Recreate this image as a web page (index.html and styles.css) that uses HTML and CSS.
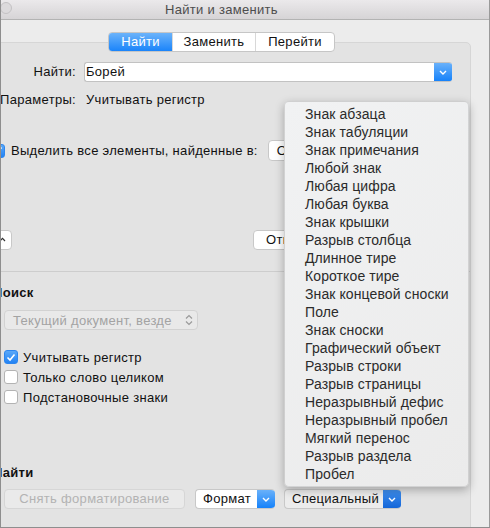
FILE: index.html
```html
<!DOCTYPE html>
<html lang="ru">
<head>
<meta charset="utf-8">
<title>Найти и заменить</title>
<link rel="stylesheet" href="styles.css">
</head>
<body>
<div class="frame">
  <div class="window">
    <div class="titlebar">
      <div class="lights"><span class="light"></span><span class="light"></span><span class="light"></span></div>
      <span class="title">Найти и заменить</span>
    </div>
    <div class="content">
      <div class="panel">
        <div class="tabs">
          <span class="tab tab-on">Найти</span>
          <span class="tab">Заменить</span>
          <span class="tab">Перейти</span>
        </div>

        <div class="find-grid">
          <span class="label">Найти:</span>
          <div class="combo">
            <span class="combo-text">Борей</span>
            <span class="blue-seg"><svg width="8" height="5" viewBox="0 0 8 5"><polyline points="1,1 4,4 7,1" fill="none" stroke="#fff" stroke-width="1.4"/></svg></span>
          </div>
          <span class="label">Параметры:</span>
          <span class="value">Учитывать регистр</span>
        </div>

        <div class="highlight-row">
          <span class="check on"><svg width="10" height="9" viewBox="0 0 10 9"><polyline points="1.5,4.5 4,7 8.5,1.5" fill="none" stroke="#fff" stroke-width="1.6"/></svg></span>
          <span class="text">Выделить все элементы, найденные в:</span>
          <span class="popup-btn">Основной документ</span>
        </div>

        <div class="actions-row">
          <span class="small-btn"><svg width="7" height="5" viewBox="0 0 7 5"><polyline points="1,4 3.5,1.3 6,4" fill="none" stroke="#333" stroke-width="1.2"/></svg></span>
          <span class="push-btn">Отмена</span>
        </div>

        <div class="sep"></div>

        <div class="section">
          <div class="heading">Поиск</div>
          <div class="scope">
            <span class="scope-text">Текущий документ, везде</span>
            <svg class="updown" width="8" height="12" viewBox="0 0 8 12"><polyline points="1,4.5 4,1.5 7,4.5" fill="none" stroke="#9a9a9a" stroke-width="1.2"/><polyline points="1,7.5 4,10.5 7,7.5" fill="none" stroke="#9a9a9a" stroke-width="1.2"/></svg>
          </div>
          <div class="opts">
            <div class="opt"><span class="check on"><svg width="10" height="9" viewBox="0 0 10 9"><polyline points="1.5,4.5 4,7 8.5,1.5" fill="none" stroke="#fff" stroke-width="1.6"/></svg></span><span>Учитывать регистр</span></div>
            <div class="opt"><span class="check"></span><span>Только слово целиком</span></div>
            <div class="opt"><span class="check"></span><span>Подстановочные знаки</span></div>
          </div>
        </div>

        <div class="section">
          <div class="heading heading-find">Найти</div>
          <div class="btn-row">
            <span class="disabled-btn">Снять форматирование</span>
            <span class="seg-popup fmt"><span class="seg-text">Формат</span><span class="blue-seg"><svg width="8" height="5" viewBox="0 0 8 5"><polyline points="1,1 4,4 7,1" fill="none" stroke="#fff" stroke-width="1.4"/></svg></span></span>
            <span class="seg-popup special pressed"><span class="seg-text">Специальный</span><span class="blue-seg dark"><svg width="8" height="5" viewBox="0 0 8 5"><polyline points="1,1 4,4 7,1" fill="none" stroke="#fff" stroke-width="1.4"/></svg></span></span>
          </div>
        </div>
      </div>
    </div>
  </div>

  <ul class="menu">
    <li>Знак абзаца</li>
    <li>Знак табуляции</li>
    <li>Знак примечания</li>
    <li>Любой знак</li>
    <li>Любая цифра</li>
    <li>Любая буква</li>
    <li>Знак крышки</li>
    <li>Разрыв столбца</li>
    <li>Длинное тире</li>
    <li>Короткое тире</li>
    <li>Знак концевой сноски</li>
    <li>Поле</li>
    <li>Знак сноски</li>
    <li>Графический объект</li>
    <li>Разрыв строки</li>
    <li>Разрыв страницы</li>
    <li>Неразрывный дефис</li>
    <li>Неразрывный пробел</li>
    <li>Мягкий перенос</li>
    <li>Разрыв раздела</li>
    <li>Пробел</li>
  </ul>
</div>
</body>
</html>
```

FILE: styles.css
```css
* { box-sizing: border-box; }

html, body {
  margin: 0;
  padding: 0;
  background: #f4f4f4;
}

body {
  font-family: "Liberation Sans", Arial, sans-serif;
  font-size: 13px;
  letter-spacing: 0.3px;
  color: #111;
}

.frame {
  position: relative;
  width: 490px;
  height: 528px;
  overflow: hidden;
  border-left: 1px solid #8e8e8e;
  border-bottom: 1px solid #8e8e8e;
}

.window {
  margin-left: -48px;
  width: 537px;
  height: 540px;
  border-left: 1px solid #8e8e8e;
  border-right: 1px solid #9a9a9a;
  background: #ececec;
  display: flex;
  flex-direction: column;
}

.titlebar {
  position: relative;
  height: 20px;
  flex: none;
  background: linear-gradient(#ebe9eb, #d6d4d6);
  border-bottom: 1px solid #b3b3b3;
  display: flex;
  justify-content: center;
  align-items: center;
}

.lights {
  position: absolute;
  left: 6px;
  top: 2px;
  display: flex;
  gap: 8px;
}

.light {
  width: 12px;
  height: 12px;
  border-radius: 50%;
  background: #dcdadc;
  border: 1px solid #c4c2c4;
}

.title {
  color: #4d4d4d;
  font-size: 13px;
  line-height: 16px;
  padding-top: 1px;
}

.content {
  flex: 1;
  padding: 22px 18px 0 18px;
}

.panel {
  height: 520px;
  background: #e3e3e3;
  border: 1px solid #d6d6d6;
  border-radius: 5px;
}

/* tabs */
.tabs {
  display: flex;
  width: max-content;
  margin: -11px auto 0;
  height: 20px;
  border: 1px solid #c6c6c6;
  border-radius: 4px;
  background: #fff;
  overflow: hidden;
}

.tab {
  display: flex;
  align-items: center;
  justify-content: center;
  color: #111;
  line-height: 18px;
  border-left: 1px solid #d8d8d8;
  white-space: nowrap;
}

.tab:first-child { border-left: none; }
.tab:nth-child(2) { width: 83px; }
.tab:nth-child(3) { width: 79px; }

.tab-on {
  width: 63px;
  color: #fff;
  background: linear-gradient(#6bb3fa, #1a84fa);
}

/* find grid */
.find-grid {
  display: grid;
  grid-template-columns: 103px 1fr;
  column-gap: 8px;
  row-gap: 10px;
  margin: 10px 18px 0 0;
  align-items: center;
}

.label {
  display: flex;
  justify-content: flex-end;
  white-space: nowrap;
  line-height: 16px;
}

.value {
  padding-left: 2px;
  line-height: 16px;
}

.combo {
  display: flex;
  height: 20px;
  background: #fff;
  border: 1px solid #c2c2c2;
  border-right: none;
  border-radius: 3px;
  overflow: hidden;
}

.combo-text {
  flex: 1;
  padding-left: 1px;
  line-height: 18px;
}

.blue-seg {
  width: 18px;
  flex: none;
  display: flex;
  align-items: center;
  justify-content: center;
  background: linear-gradient(#69b1fa, #1682fa);
  padding-top: 1px;
}

.blue-seg.dark {
  background: linear-gradient(#3f8fee, #1466d8);
}

/* highlight row */
.highlight-row {
  display: flex;
  align-items: center;
  height: 21px;
  margin-top: 32px;
  padding-left: 18px;
  white-space: nowrap;
}

.check {
  width: 14px;
  height: 14px;
  flex: none;
  border-radius: 3px;
  background: #fff;
  border: 1px solid #b3b3b3;
  display: flex;
  align-items: center;
  justify-content: center;
}

.check.on {
  border-color: #2d86ee;
  background: linear-gradient(#5aa8f8, #2383f4);
}

.highlight-row .text { margin-left: 6px; }

.popup-btn {
  margin-left: 10px;
  height: 21px;
  line-height: 19px;
  padding: 0 8px;
  background: #fff;
  border: 1px solid #c8c8c8;
  border-radius: 4px;
  width: 160px;
  flex: none;
  overflow: hidden;
}

/* actions row */
.actions-row {
  display: flex;
  align-items: center;
  margin-top: 69px;
  height: 20px;
  padding-left: 19px;
}

.small-btn {
  width: 20px;
  height: 20px;
  display: flex;
  align-items: center;
  justify-content: center;
  padding-bottom: 2px;
  background: #fff;
  border: 1px solid #c8c8c8;
  border-radius: 4px;
}

.push-btn {
  margin-left: 241px;
  height: 20px;
  line-height: 18px;
  padding: 0 12px;
  width: 90px;
  background: #fff;
  border: 1px solid #c8c8c8;
  border-radius: 4px;
}

.sep {
  height: 1px;
  background: #cdcdcd;
  margin-top: 21px;
}

/* sections */
.section {
  padding-left: 20px;
}

.heading {
  font-weight: bold;
  line-height: 16px;
  margin-top: 13px;
}

.heading-find { margin-top: 58px; }

.scope {
  display: flex;
  align-items: center;
  justify-content: space-between;
  width: 194px;
  height: 20px;
  margin: 9px 0 0 11px;
  padding: 0 4px 0 8px;
  background: #e9e9e9;
  border: 1px solid #d2d2d2;
  border-radius: 4px;
  color: #a3a3a3;
  white-space: nowrap;
}

.opts {
  margin: 17px 0 0 11px;
}

.opt {
  display: flex;
  align-items: center;
  gap: 5px;
  height: 20px;
  white-space: nowrap;
}

.btn-row {
  display: flex;
  align-items: center;
  margin: 8px 0 0 11px;
  height: 20px;
}

.disabled-btn {
  width: 181px;
  height: 20px;
  line-height: 18px;
  text-align: center;
  color: #b3b3b3;
  background: #eaeaea;
  border: 1px solid #d6d6d6;
  border-radius: 4px;
  white-space: nowrap;
}

.seg-popup {
  display: flex;
  height: 20px;
  border: 1px solid #c8c8c8;
  border-right: none;
  border-radius: 4px;
  overflow: hidden;
  background: #fff;
  white-space: nowrap;
}

.seg-popup.fmt { margin-left: 10px; width: 80px; }
.seg-popup.special { margin-left: 9px; width: 117px; }

.seg-popup.pressed { background: #ececec; }

.seg-text {
  flex: 1;
  padding: 0 0 0 7px;
  line-height: 18px;
  overflow: hidden;
}

/* menu */
.menu {
  position: absolute;
  left: 283px;
  top: 101px;
  width: 185px;
  height: 386px;
  margin: 0;
  padding: 3px 0 0;
  list-style: none;
  background: linear-gradient(135deg, #f1f2f3, #ebebeb);
  border: 1px solid rgba(0, 0, 0, 0.12);
  border-radius: 5px;
  box-shadow: 0 3px 10px rgba(0, 0, 0, 0.28);
}

.menu li {
  height: 18px;
  line-height: 18px;
  padding-left: 20px;
  font-size: 14px;
  letter-spacing: 0.1px;
  color: #2b2b2b;
  white-space: nowrap;
}
```
